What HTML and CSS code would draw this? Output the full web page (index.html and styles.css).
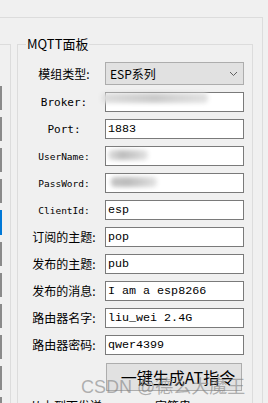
FILE: index.html
```html
<!DOCTYPE html>
<html lang="zh-CN">
<head>
  <meta charset="UTF-8">
  <meta name="viewport" content="width=device-width, initial-scale=1.0">
  <title>MQTT面板</title>
  <link rel="stylesheet" href="styles.css">
</head>
<body>
  <div class="frame">
    <div class="side">
      <div class="side-btn"></div>
      <div class="side-btn"></div>
      <div class="side-btn"></div>
      <div class="side-btn"></div>
      <div class="side-btn focus"></div>
      <div class="side-btn"></div>
      <div class="side-btn"></div>
      <div class="side-btn"></div>
      <div class="side-btn"></div>
      <div class="side-btn"></div>
      <div class="side-btn"></div>
    </div>

    <fieldset class="panel">
      <legend>MQTT面板</legend>

      <div class="form">
        <label class="cn">模组类型:</label>
        <div class="combo">
          <span>ESP系列</span>
          <svg width="9" height="6" viewBox="0 0 9 6"><path d="M1 1 L4.5 4.5 L8 1" fill="none" stroke="#606060" stroke-width="1"/></svg>
        </div>

        <label class="en big">Broker:</label>
        <div class="box"><span class="blur blur-broker"></span></div>

        <label class="en big">Port:</label>
        <div class="box">1883</div>

        <label class="en">UserName:</label>
        <div class="box"><span class="blur blur-user"></span></div>

        <label class="en">PassWord:</label>
        <div class="box"><span class="blur blur-pass"></span></div>

        <label class="en">ClientId:</label>
        <div class="box">esp</div>

        <label class="cn">订阅的主题:</label>
        <div class="box">pop</div>

        <label class="cn">发布的主题:</label>
        <div class="box">pub</div>

        <label class="cn">发布的消息:</label>
        <div class="box">I am a esp8266</div>

        <label class="cn">路由器名字:</label>
        <div class="box">liu_wei 2.4G</div>

        <label class="cn">路由器密码:</label>
        <div class="box">qwer4399</div>

        <div class="btn">一键生成AT指令</div>
      </div>

      <div class="status">
        <span>从上到下发送</span>
        <span class="status-right">字符串</span>
      </div>
    </fieldset>
  </div>

  <div class="watermark">CSDN @德么大魔王</div>
</body>
</html>
```

FILE: styles.css
```css
body {
  margin: 0;
  background-color: #f0f0f0;
  font-family: "Noto Sans CJK SC", "Noto Sans", sans-serif;
  color: #000;
  height: 403px;
  overflow: hidden;
  position: relative;
}

.frame {
  margin-top: 17px;
  width: 262px;
  height: 400px;
  border-top: 1px solid #dcdcdc;
  border-right: 1px solid #dcdcdc;
  display: flex;
  align-items: flex-start;
}

.side {
  margin-top: 26px;
  width: 10px;
  height: 400px;
  border-top: 1px solid #dcdcdc;
  border-right: 1px solid #dcdcdc;
  padding-top: 41px;
  display: flex;
  flex-direction: column;
  gap: 7px;
}

.side-btn {
  width: 2px;
  height: 24px;
  background-color: #8a8a8a;
}

.side-btn.focus {
  background-color: #0078d7;
  height: 25px;
}

.panel {
  margin: 19px 0 0 6px;
  width: 236px;
  height: 420px;
  box-sizing: border-box;
  border: 1px solid #dcdcdc;
  padding: 11px 0 0 12px;
  min-width: 0;
}

.panel legend {
  margin-left: -4px;
  padding: 0 1px;
  font-size: 13px;
  line-height: 14px;
}

.form {
  display: grid;
  grid-template-columns: 68px 139px;
  column-gap: 7px;
  row-gap: 7px;
  align-items: center;
}

.form label {
  text-align: center;
  white-space: nowrap;
}

.cn {
  font-size: 12px;
  line-height: 14px;
}

.en {
  font-family: "DejaVu Sans Mono", monospace;
  font-size: 9.5px;
}

.en.big {
  font-size: 11px;
}

.combo {
  height: 23px;
  box-sizing: border-box;
  background-color: #e1e1e1;
  border: 1px solid #adadad;
  display: flex;
  align-items: center;
  justify-content: space-between;
  padding: 0 5px 0 4px;
  font-size: 12px;
}

.box {
  height: 20px;
  box-sizing: border-box;
  background-color: #fff;
  border: 1px solid #7a7a7a;
  padding: 0 2px;
  font-family: "Liberation Mono", monospace;
  font-size: 11.7px;
  line-height: 18px;
  white-space: nowrap;
}

.blur {
  display: inline-block;
  height: 10px;
  vertical-align: middle;
  filter: blur(2px);
  border-radius: 4px;
}

.blur-broker {
  width: 106px;
  margin-left: -6px;
  margin-top: -8px;
  background: linear-gradient(90deg, #dedede 0%, #d2d2d2 30%, #cacaca 50%, #d6d6d6 70%, #e2e2e2 100%);
}

.blur-user {
  width: 40px;
  margin-left: 0;
  margin-top: -2px;
  background: linear-gradient(90deg, #e2e2e2 0%, #bdbdbd 35%, #cfcfcf 70%, #e6e6e6 100%);
}

.blur-pass {
  width: 46px;
  margin-left: 3px;
  margin-top: -2px;
  background: linear-gradient(90deg, #c6c6c6 0%, #bcbcbc 35%, #d2d2d2 75%, #e6e6e6 100%);
}

.btn {
  grid-column: 2;
  margin: 1px 2px 0 1px;
  height: 28px;
  box-sizing: border-box;
  background-color: #e1e1e1;
  border: 1px solid #adadad;
  font-size: 16px;
  line-height: 26px;
  text-align: center;
  padding-left: 8px;
}

.status {
  margin-top: 8px;
  font-size: 12px;
  line-height: 14px;
  display: flex;
}

.status-right {
  margin-left: 53px;
}

.watermark {
  position: absolute;
  left: 81px;
  top: 372px;
  font-family: "Liberation Sans", "Noto Sans CJK SC", sans-serif;
  font-size: 18px;
  color: rgba(130, 130, 130, 0.6);
  white-space: nowrap;
}
```
